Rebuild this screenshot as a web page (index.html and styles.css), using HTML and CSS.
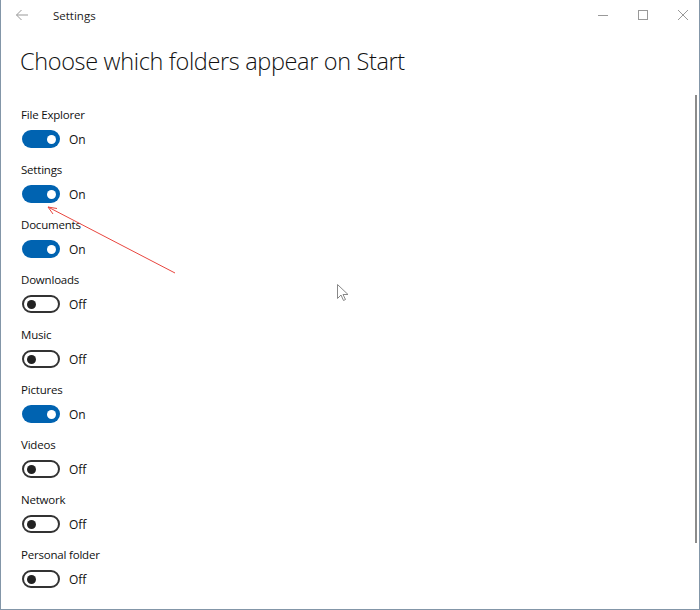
FILE: index.html
```html
<!DOCTYPE html>
<html lang="en">
<head>
    <meta charset="UTF-8">
    <title>Settings</title>
    <link rel="stylesheet" href="styles.css">
</head>
<body>
    <div class="window">
        <div class="titlebar">
            <span class="back">
                <svg width="14" height="12" viewBox="0 0 14 12"><path d="M13 6H1.5M6.5 1L1.5 6l5 5" fill="none" stroke="#999" stroke-width="1"/></svg>
            </span>
            <span class="title">Settings</span>
            <div class="controls">
                <span class="ctrl"><svg width="12" height="12" viewBox="0 0 12 12"><path d="M1 6.5h10" stroke="#999" stroke-width="1"/></svg></span>
                <span class="ctrl"><svg width="12" height="12" viewBox="0 0 12 12"><rect x="1.5" y="1.5" width="9" height="9" fill="none" stroke="#999" stroke-width="1"/></svg></span>
                <span class="ctrl"><svg width="12" height="12" viewBox="0 0 12 12"><path d="M1 1l10 10M11 1L1 11" stroke="#999" stroke-width="1"/></svg></span>
            </div>
        </div>

        <div class="content">
            <h1>Choose which folders appear on Start</h1>

            <div class="options" id="options">
                <!-- toggles filled in by script -->
            </div>
        </div>

        <div class="scrollbar"></div>

        <!-- annotation arrow and cursor from the screenshot -->
        <svg class="arrow" width="700" height="610" viewBox="0 0 700 610">
            <path d="M175 273L48 207" stroke="#e8463f" stroke-width="1"/>
            <path d="M48 207l9 1.5M48 207l5 7" stroke="#e8463f" stroke-width="1" fill="none"/>
        </svg>
        <svg class="cursor" width="12" height="18" viewBox="0 0 12 18">
            <path d="M0.5 0.5v14l3.5-3.5 2.5 5.5 2-1-2.5-5h5z" fill="#fff" stroke="#888" stroke-width="1"/>
        </svg>
    </div>

    <script>
        const folders = [
            { name: "File Explorer", on: true },
            { name: "Settings", on: true },
            { name: "Documents", on: true },
            { name: "Downloads", on: false },
            { name: "Music", on: false },
            { name: "Pictures", on: true },
            { name: "Videos", on: false },
            { name: "Network", on: false },
            { name: "Personal folder", on: false }
        ];

        const list = document.getElementById('options');
        folders.forEach(f => {
            const item = document.createElement('div');
            item.className = 'option';
            item.innerHTML = `
                <div class="label">${f.name}</div>
                <div class="toggle-row">
                    <span class="toggle ${f.on ? 'on' : 'off'}"><span class="knob"></span></span>
                    <span class="state">${f.on ? 'On' : 'Off'}</span>
                </div>
            `;
            list.appendChild(item);
        });
    </script>
</body>
</html>
```

FILE: styles.css
```css
html, body {
    margin: 0;
    padding: 0;
    background: #fff;
}

body {
    font-family: 'Open Sans', 'Noto Sans', sans-serif;
    color: #000;
}

.window {
    position: relative;
    width: 700px;
    height: 610px;
    box-sizing: border-box;
    border-left: 1px solid #8396a8;
    border-right: 1px solid #8396a8;
    border-bottom: 1px solid #8396a8;
    overflow: hidden;
}

.titlebar {
    height: 30px;
    display: flex;
    align-items: center;
}

.back {
    width: 38px;
    padding-left: 14px;
    display: flex;
    align-items: center;
}

.title {
    font-size: 11.5px;
    color: #222;
}

.controls {
    margin-left: auto;
    margin-right: -4px;
    display: flex;
}

.ctrl {
    width: 40px;
    height: 30px;
    display: flex;
    align-items: center;
    justify-content: center;
}

.content {
    padding-left: 20px;
}

h1 {
    font-size: 23.5px;
    font-weight: 300;
    letter-spacing: -0.35px;
    line-height: 32px;
    margin: 15px 0 29px -1px;
    color: #111;
}

.option {
    margin-bottom: 12px;
}

.label {
    font-size: 11.5px;
    letter-spacing: -0.2px;
    line-height: 18px;
    color: #111;
}

.toggle-row {
    margin-top: 5px;
    height: 20px;
    display: flex;
    align-items: center;
}

.toggle {
    box-sizing: border-box;
    width: 38px;
    height: 18px;
    border-radius: 9px;
    display: flex;
    align-items: center;
    padding: 0 4px;
    margin-left: 1px;
}

.toggle.on {
    background: #0063b1;
    justify-content: flex-end;
}

.toggle.off {
    border: 2px solid #333;
    padding: 0 3px;
}

.knob {
    width: 9px;
    height: 9px;
    border-radius: 50%;
}

.on .knob {
    background: #fff;
}

.off .knob {
    background: #222;
}

.state {
    font-size: 12px;
    margin-left: 9px;
    color: #111;
}

.scrollbar {
    position: absolute;
    right: 2px;
    top: 95px;
    width: 2px;
    height: 448px;
    background: #8c8c8c;
}

.arrow {
    position: absolute;
    left: -1px;
    top: 0;
    pointer-events: none;
}

.cursor {
    position: absolute;
    left: 336px;
    top: 284px;
}
```
